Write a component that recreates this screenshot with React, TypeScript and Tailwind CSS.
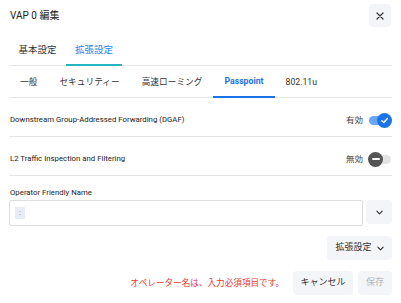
import React from "react";

const font = { fontFamily: "Roboto, 'Noto Sans CJK JP', sans-serif" };

function Toggle({ on }: { on: boolean }) {
  return (
    <div className="relative w-[24px] h-[15px] flex items-center">
      <div
        className={`w-[22px] h-[9px] rounded-full ml-[1px] ${on ? "bg-[#6aa7f2]" : "bg-[#e3e3e3]"}`}
      />
      {on ? (
        <div className="absolute right-0 top-0 w-[15px] h-[15px] rounded-full bg-[#1a73e8] flex items-center justify-center">
          <svg width="9" height="9" viewBox="0 0 10 10">
            <path d="M2 5.2 L4.2 7.3 L8.2 2.8" fill="none" stroke="white" strokeWidth="1.6" strokeLinecap="round" strokeLinejoin="round" />
          </svg>
        </div>
      ) : (
        <div className="absolute left-0 top-0 w-[15px] h-[15px] rounded-full bg-[#555555] flex items-center justify-center">
          <div className="w-[8px] h-[1.6px] bg-white rounded" />
        </div>
      )}
    </div>
  );
}

function Chevron() {
  return (
    <svg width="7" height="5" viewBox="0 0 8 5">
      <path d="M1 1 L4 4 L7 1" fill="none" stroke="#333" strokeWidth="1.3" strokeLinecap="round" strokeLinejoin="round" />
    </svg>
  );
}

export default function App() {
  const subTabs = ["一般", "セキュリティー", "高速ローミング", "Passpoint", "802.11u"];
  return (
    <div className="w-[401px] h-[303px] bg-white overflow-hidden text-[#222]" style={font}>
      {/* header */}
      <div className="flex items-center justify-between pl-[10px] pr-[10px] pt-[4px]">
        <span className="text-[10px] text-[#222]">VAP 0 編集</span>
        <button className="w-[22px] h-[23px] rounded bg-[#f4f5f8] flex items-center justify-center">
          <svg width="8" height="8" viewBox="0 0 8 8">
            <path d="M1 1 L7 7 M7 1 L1 7" stroke="#333" strokeWidth="1.2" strokeLinecap="round" />
          </svg>
        </button>
      </div>

      <div className="px-[9px]">
        {/* main tabs */}
        <div className="flex mt-[9px] border-b border-[#e6e6e6] h-[30px]">
          <div className="w-[57px] flex items-center justify-center text-[9.5px] text-[#333]">基本設定</div>
          <div className="w-[56px] flex items-center justify-center text-[9.5px] text-[#1e88e5] border-b-2 border-[#26b5c0] -mb-[1px]">
            拡張設定
          </div>
        </div>

        {/* sub tabs */}
        <div className="flex h-[32px] border-b border-[#e6e6e6]">
          {subTabs.map((t) => {
            const active = t === "Passpoint";
            return (
              <div
                key={t}
                className={`px-[11px] pt-[2px] flex items-center text-[8.7px] ${
                  active
                    ? "font-bold text-[#1a73e8] border-b-2 border-[#1a73e8] -mb-[1px]"
                    : "text-[#333]"
                }`}
              >
                {t}
              </div>
            );
          })}
        </div>

        {/* DGAF */}
        <div className="flex items-center justify-between h-[39px] pt-[6px] border-b border-[#e6e6e6]">
          <span className="text-[7.8px] pl-[1px]">Downstream Group-Addressed Forwarding (DGAF)</span>
          <div className="flex items-center gap-[5px]">
            <span className="text-[8.5px] text-[#444]">有効</span>
            <Toggle on />
          </div>
        </div>

        {/* L2 */}
        <div className="flex items-center justify-between h-[39px] pt-[6px] border-b border-[#e6e6e6]">
          <span className="text-[7.8px] pl-[1px]">L2 Traffic Inspection and Filtering</span>
          <div className="flex items-center gap-[5px]">
            <span className="text-[8.5px] text-[#444]">無効</span>
            <Toggle on={false} />
          </div>
        </div>

        {/* Operator friendly name */}
        <div className="pt-[11px] text-[7.8px] pl-[1px] leading-[12px]">Operator Friendly Name</div>
        <div className="flex gap-[3px] mt-[1px]">
          <div className="flex-1 h-[26px] border border-[#dedede] rounded-[2px] flex items-center px-[5px]">
            <span className="w-[10px] h-[12px] bg-[#e8ecf4] rounded-[1px] flex items-center justify-center text-[8px] text-[#777]">:</span>
          </div>
          <button className="w-[26px] h-[24px] bg-[#f4f5f8] rounded flex items-center justify-center">
            <Chevron />
          </button>
        </div>

        <div className="flex justify-end mt-[10px]">
          <button className="w-[65px] h-[24px] bg-[#f4f5f8] rounded flex items-center justify-center gap-[5px] text-[9px] text-[#333]">
            拡張設定 <Chevron />
          </button>
        </div>

        <div className="flex justify-end items-center mt-[11px] gap-[5px]">
          <span className="text-[8.6px] text-[#e53935] mr-[4px]">オペレーター名は、入力必須項目です。</span>
          <button className="w-[60px] h-[24px] bg-[#f4f5f8] rounded text-[9px] text-[#333]">キャンセル</button>
          <button className="w-[34px] h-[24px] bg-[#f4f5f8] rounded text-[9px] text-[#b5b5b5]">保存</button>
        </div>
      </div>
    </div>
  );
}
